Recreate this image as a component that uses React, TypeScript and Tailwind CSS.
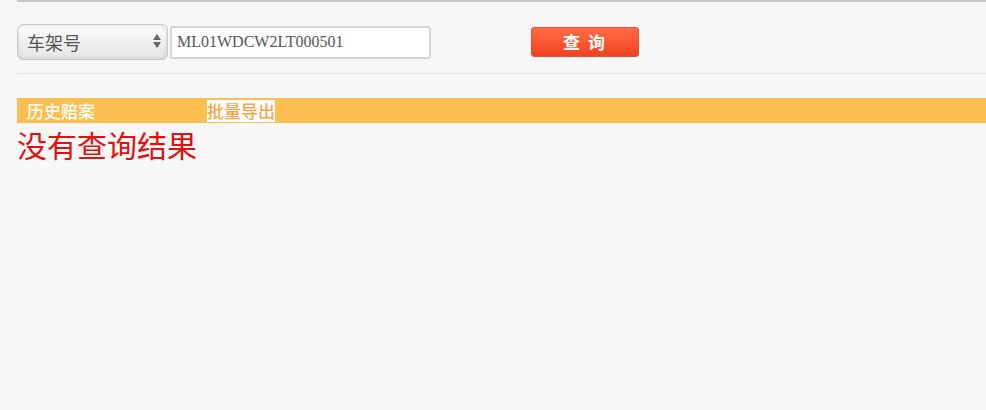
import { useState } from "react";

export default function App() {
    const [field, setField] = useState("vin");
    const [keyword, setKeyword] = useState("ML01WDCW2LT000501");

    return (
        <div className="h-[410px] w-full overflow-hidden bg-[#f7f7f7] pl-[17px] font-['Noto_Sans_CJK_SC',sans-serif]">
            {/* top border */}
            <div className="h-[2px] bg-[#c9c9c9]" />

            {/* search row */}
            <div className="flex items-center pt-[22px]">
                <div className="relative h-[36px] w-[151px] rounded-[6px] border border-[#c8c8c8] bg-gradient-to-b from-[#fdfdfd] to-[#e4e4e4] shadow-[inset_0_0_4px_rgba(0,0,0,0.12)]">
                    <select
                        value={field}
                        onChange={(e) => setField(e.target.value)}
                        className="h-full w-full appearance-none bg-transparent pl-[9px] font-['Noto_Sans_CJK_SC',sans-serif] text-[18px] text-[#555] outline-none"
                    >
                        <option value="vin">车架号</option>
                        <option value="plate">车牌号</option>
                    </select>
                    <div className="pointer-events-none absolute right-[6px] top-[9px] flex flex-col items-center gap-[2px]">
                        <span className="h-0 w-0 border-x-[4px] border-b-[6px] border-x-transparent border-b-[#666]" />
                        <span className="h-0 w-0 border-x-[4px] border-t-[6px] border-x-transparent border-t-[#666]" />
                    </div>
                </div>
                <input
                    value={keyword}
                    onChange={(e) => setKeyword(e.target.value)}
                    className="ml-[2px] h-[33px] w-[261px] rounded-[3px] border-2 border-[#d4d4d4] bg-white pl-[5px] font-['Liberation_Serif',serif] text-[16px] text-[#555] outline-none"
                />
                <button className="ml-[100px] h-[30px] w-[108px] rounded-[3px] border border-[#e8502a] bg-gradient-to-b from-[#ff6c45] to-[#f2401d] text-[17px] font-bold tracking-[2px] text-white">
                    查 询
                </button>
            </div>

            {/* separator */}
            <div className="mt-[13px] h-px bg-[#e6e6e6]" />

            {/* history bar */}
            <div className="mt-[24px] flex h-[25px] items-center bg-[#fabe51]">
                <span className="ml-[10px] w-[180px] text-[17px] font-medium text-white">历史赔案</span>
                <button className="h-[22px] bg-white px-0 text-[17px] leading-[22px] font-medium text-[#f5a54a]">
                    批量导出
                </button>
            </div>

            <div className="mt-[3px] text-[30px] leading-[36px] font-normal text-[#e2100e]">没有查询结果</div>
        </div>
    );
}
